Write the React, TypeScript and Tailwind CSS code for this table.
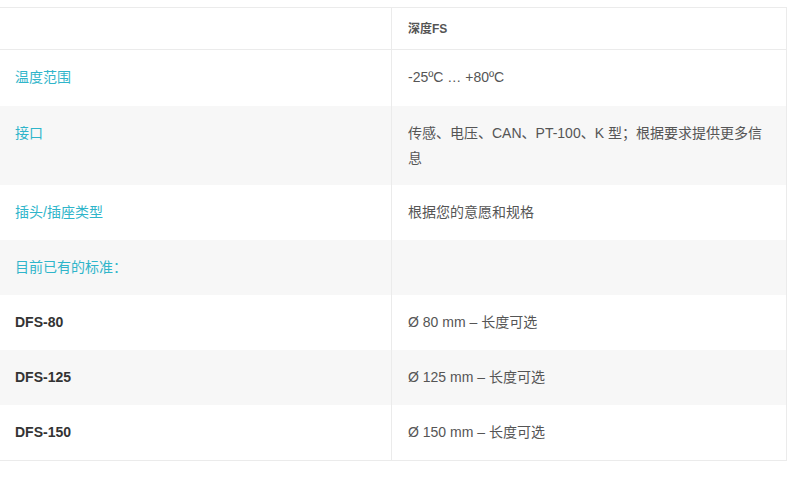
import React from "react";

const rows: { label: string; value: string; gray: boolean; bold?: boolean; h: string }[] = [
  { label: "温度范围", value: "-25ºC … +80ºC", gray: false, h: "h-[56px]" },
  { label: "接口", value: "传感、电压、CAN、PT-100、K 型；根据要求提供更多信息", gray: true, h: "h-[79px]" },
  { label: "插头/插座类型", value: "根据您的意愿和规格", gray: false, h: "h-[55px]" },
  { label: "目前已有的标准：", value: "", gray: true, h: "h-[55px]" },
  { label: "DFS-80", value: "Ø 80 mm – 长度可选", gray: false, bold: true, h: "h-[55px]" },
  { label: "DFS-125", value: "Ø 125 mm – 长度可选", gray: true, bold: true, h: "h-[55px]" },
  { label: "DFS-150", value: "Ø 150 mm – 长度可选", gray: false, bold: true, h: "h-[55px]" },
];

export default function App() {
  return (
    <div
      className="w-[800px] h-[478px] bg-white pt-[7px]"
      style={{ fontFamily: '"Liberation Sans", Arial, "Noto Sans CJK SC", sans-serif' }}
    >
      <div className="w-[787px] border-t border-r border-b border-[#ebebeb]">
        <div className="grid grid-cols-[392px_1fr] h-[42px] border-b border-[#ebebeb]">
          <div className="border-r border-[#ebebeb]" />
          <div className="pl-[16px] flex items-center text-[12px] font-bold text-[#555]">深度FS</div>
        </div>
        {rows.map((r, i) => (
          <div
            key={i}
            className={`grid grid-cols-[392px_1fr] ${r.h} ${r.gray ? "bg-[#f7f7f7]" : "bg-white"}`}
          >
            <div
              className={`border-r border-[#ebebeb] pl-[15px] pt-[15px] text-[14px] leading-[25px] ${
                r.bold ? "font-bold text-[#333]" : "text-[#2fb5ca]"
              }`}
            >
              {r.label}
            </div>
            <div className="pl-[16px] pr-[20px] pt-[15px] text-[14px] leading-[25px] text-[#555]">
              {r.value}
            </div>
          </div>
        ))}
      </div>
    </div>
  );
}
